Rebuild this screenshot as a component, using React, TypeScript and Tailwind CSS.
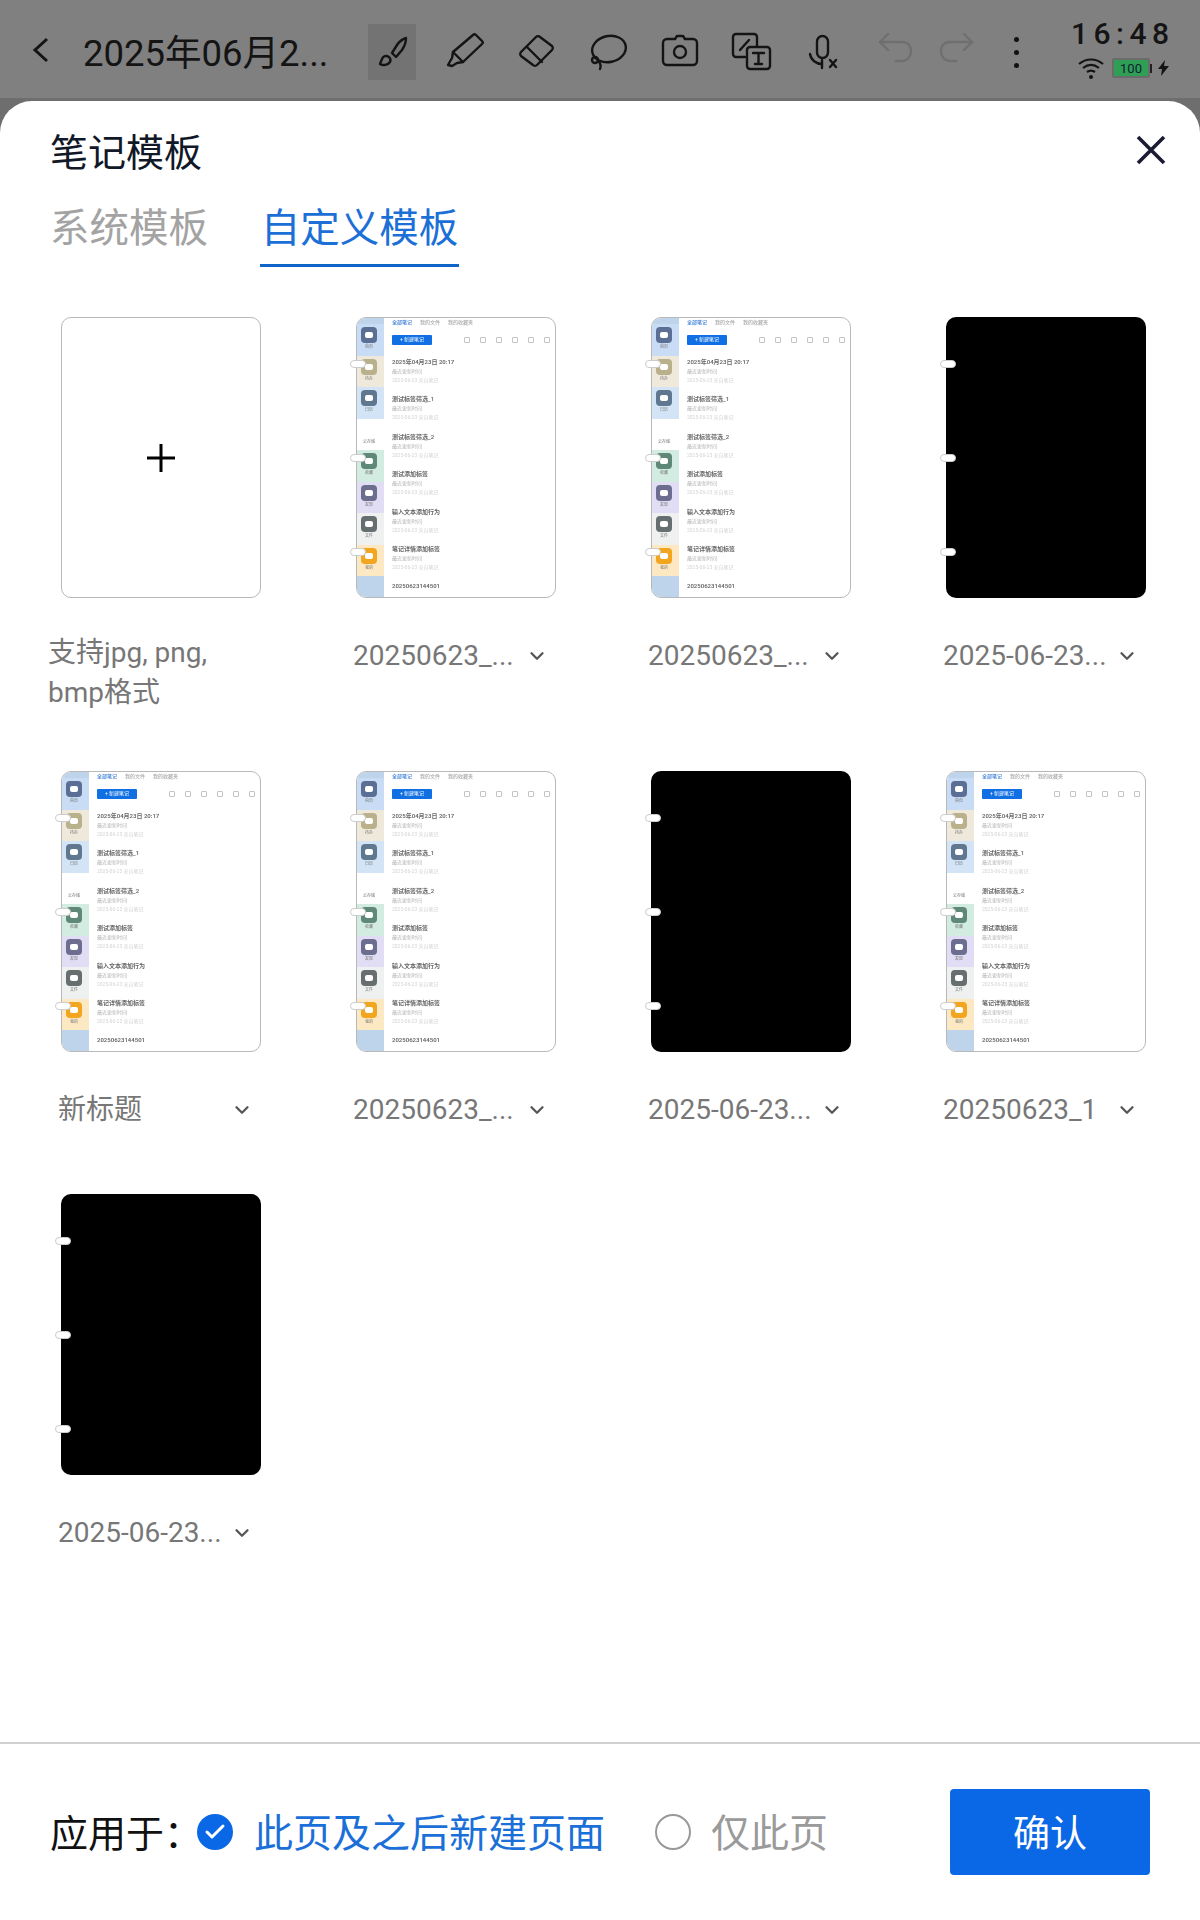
import React from "react";
import { ChevronDown, Check } from "lucide-react";

const FONT = "font-['Roboto','Noto_Sans_CJK_SC',sans-serif]";

const sideItems = [
  { bg: "bg-[#c9dcf5]", icon: "bg-[#5b6f95]", label: "首页" },
  { bg: "bg-[#efe9dc]", icon: "bg-[#b9b08c]", label: "待办" },
  { bg: "bg-[#d3e4f6]", icon: "bg-[#60788f]", label: "日历" },
  { bg: "bg-white", icon: "bg-white", label: "云存储" },
  { bg: "bg-[#d2ece2]", icon: "bg-[#5f8878]", label: "收藏" },
  { bg: "bg-[#e0ddf4]", icon: "bg-[#6d6d90]", label: "发现" },
  { bg: "bg-[#eef1f0]", icon: "bg-[#666e70]", label: "文件" },
  { bg: "bg-[#fde8c4]", icon: "bg-[#f2a51e]", label: "我的" },
];

const noteTitles = [
  "2025年04月23日 20:17",
  "测试标签筛选_1",
  "测试标签筛选_2",
  "测试添加标签",
  "输入文本添加行为",
  "笔记详情添加标签",
];

function Rings() {
  return (
    <>
      <div className="absolute left-[-6px] top-[43px] h-[8px] w-[16px] rounded-full border border-[#ccc] bg-white" />
      <div className="absolute left-[-6px] top-[137px] h-[8px] w-[16px] rounded-full border border-[#ccc] bg-white" />
      <div className="absolute left-[-6px] top-[231px] h-[8px] w-[16px] rounded-full border border-[#ccc] bg-white" />
    </>
  );
}

function ScreenThumb() {
  return (
    <div className="relative h-[281px] w-[200px]">
      <div className="flex h-full w-full overflow-hidden rounded-[10px] border-[1.5px] border-[#b8b8b8] bg-white">
        <div className="flex w-[27px] shrink-0 flex-col bg-[#bed4ea] pt-[6px] blur-[0.3px]">
          {sideItems.map((s) => (
            <div key={s.label} className={`flex h-[31.5px] flex-col items-center pr-[3px] pt-[3px] ${s.bg}`}>
              <div className={`flex h-[16px] w-[16px] items-center justify-center rounded-[4px] ${s.icon}`}>
                <div className="h-[6px] w-[8px] rounded-[2px] bg-white" />
              </div>
              <span className="mt-[1px] text-[4px] leading-[5px] text-[#777]">{s.label}</span>
            </div>
          ))}
        </div>
        <div className="min-w-0 flex-1 pl-[8px] blur-[0.35px]">
          <div className="flex h-[9px] items-center gap-[8px] text-[5px] font-medium text-[#aaa]">
            <span className="text-[#3d7fd6]">全部笔记</span>
            <span>我的文件</span>
            <span>我的收藏夹</span>
          </div>
          <div className="mt-[4px] flex h-[18px] items-center justify-between pr-[5px]">
            <div className="flex h-[10px] w-[40px] items-center justify-center rounded-[1px] bg-[#0f6fe3] text-[5px] text-white">
              + 新建笔记
            </div>
            <div className="flex gap-[10px]">
              {[0, 1, 2, 3, 4, 5].map((i) => (
                <div key={i} className="h-[6px] w-[6px] rounded-[1px] border border-[#c4c4c4]" />
              ))}
            </div>
          </div>
          <div className="pt-[9px]">
            {noteTitles.map((t) => (
              <div key={t} className="h-[37.4px] whitespace-nowrap">
                <div className="text-[6px] leading-[8px] font-semibold text-[#666]">{t}</div>
                <div className="mt-[2px] text-[5px] leading-[6px] text-[#b5b5b5]">最近更新时间</div>
                <div className="mt-[3px] text-[5px] leading-[6px] text-[#d4d4d4]">2025-06-23 来自笔记</div>
              </div>
            ))}
            <div className="text-[6px] leading-[8px] font-semibold text-[#666]">20250623144501</div>
          </div>
        </div>
      </div>
      <Rings />
    </div>
  );
}

function BlackThumb() {
  return (
    <div className="relative h-[281px] w-[200px] rounded-[10px] bg-black">
      <Rings />
    </div>
  );
}

function Caption({ children }: { children: React.ReactNode }) {
  return (
    <div className="relative ml-[-3px] mt-[38px] flex h-[40px] w-[200px] items-center text-[28px] leading-[40px] text-[#777]">
      <span className="whitespace-nowrap">{children}</span>
      <ChevronDown size={22} strokeWidth={2.5} className="absolute left-[173px] top-[9px] text-[#555]" />
    </div>
  );
}

const templates = [
  { name: "20250623_...", black: false },
  { name: "20250623_...", black: false },
  { name: "2025-06-23...", black: true },
  { name: "新标题", black: false },
  { name: "20250623_...", black: false },
  { name: "2025-06-23...", black: true },
  { name: "20250623_1", black: false },
  { name: "2025-06-23...", black: true },
];

function ToolIcon({ w = 72, children, active }: { w?: number; children: React.ReactNode; active?: boolean }) {
  return (
    <div className="flex h-[56px] items-center justify-center" style={{ width: w }}>
      <div className={`flex h-[56px] w-[48px] items-center justify-center ${active ? "bg-[#737373]" : ""}`}>
        <svg width="44" height="44" viewBox="0 0 44 44" fill="none" stroke="currentColor" strokeWidth="2.4" strokeLinecap="round" strokeLinejoin="round">
          {children}
        </svg>
      </div>
    </div>
  );
}

function TopBar() {
  return (
    <div className="flex h-[98px] shrink-0 items-center bg-[#808080] pl-[32px] pt-[6px] text-[#141414]">
      <svg width="18" height="28" viewBox="0 0 18 28" fill="none" stroke="currentColor" strokeWidth="3" className="mb-[4px]">
        <path d="M15 3 3 14l12 11" />
      </svg>
      <div className="ml-[33px] mt-[3px] w-[273px] whitespace-nowrap text-[36.5px] leading-[56px]">2025年06月2...</div>
      <ToolIcon active>
        <path d="M36 8c-3 1-7 4-9 7l-5 8 4 4 6-7c2-3 4-8 4-12z" />
        <path d="M19 27c-3-2-6-1-7 2l-2 5c3 2 8 1 10-2 1-2 0-4-1-5z" />
      </ToolIcon>
      <ToolIcon>
        <path d="M31 5c1-1 2-1 3 0l6 6c1 1 1 2 0 3L21 32l-10-10z" />
        <path d="M11 22l-1 6-4 7 4 1 5-3 6-1" />
      </ToolIcon>
      <ToolIcon>
        <path d="M22 7c1-1 3-1 4 0l12 9c1 1 1 3 0 4L23 35c-1 1-3 1-4 0L7 26c-1-1-1-3 0-4z" />
        <path d="M13 17l15 15" />
      </ToolIcon>
      <ToolIcon>
        <ellipse cx="23" cy="19" rx="17" ry="13" transform="rotate(-12 23 19)" />
        <circle cx="9" cy="30" r="3" />
        <path d="M12 31c3 2 3 6 2 8" />
      </ToolIcon>
      <ToolIcon>
        <path d="M9 9h8l2-3h6l2 3h8a4 4 0 0 1 4 4v18a4 4 0 0 1-4 4H9a4 4 0 0 1-4-4V13a4 4 0 0 1 4-4z" />
        <circle cx="22" cy="22" r="6" />
      </ToolIcon>
      <ToolIcon>
        <path d="M15 27H6a3 3 0 0 1-3-3V7a3 3 0 0 1 3-3h18a3 3 0 0 1 3 3v9" />
        <path d="M10 20l9-10" />
        <rect x="17" y="17" width="23" height="22" rx="3" />
        <path d="M23 23h11M28.500 23v11M25 34h7" />
      </ToolIcon>
      <ToolIcon>
        <rect x="15" y="6" width="11" height="22" rx="5.500" />
        <path d="M8 24c1 6 6 10 12 10" />
        <path d="M20 30v8" />
        <path d="M28 30l6 7M34 30l-6 7" />
      </ToolIcon>
      <div className="text-[#6f6f6f]">
        <ToolIcon>
          <path d="M6 12h22c6 0 9 4 9 9s-3 10-9 10h-6" />
          <path d="M14 4 6 12l8 8" />
        </ToolIcon>
      </div>
      <div className="text-[#6f6f6f]">
        <ToolIcon w={48}>
          <path d="M38 12H16c-6 0-9 4-9 9s3 10 9 10h6" />
          <path d="M30 4l8 8-8 8" />
        </ToolIcon>
      </div>
      <div className="flex h-[56px] w-[72px] flex-col items-center justify-center gap-[8px]">
        <div className="h-[5px] w-[5px] rounded-full bg-[#111]" />
        <div className="h-[5px] w-[5px] rounded-full bg-[#111]" />
        <div className="h-[5px] w-[5px] rounded-full bg-[#111]" />
      </div>
      <div className="ml-[19px] mt-[-6px] flex w-[108px] flex-col">
        <div className="h-[32px] whitespace-nowrap text-[30px] font-medium leading-[32px] tracking-[5.5px]">16:48</div>
        <div className="mt-[6px] flex items-center">
          <svg width="28" height="24" viewBox="0 0 28 24" fill="none" stroke="currentColor" strokeWidth="2.2" className="ml-[6px]">
            <path d="M2 8c7-6 17-6 24 0M6 12c5-4 11-4 16 0M10 16c3-2 5-2 8 0" />
            <circle cx="14" cy="21" r="2" fill="currentColor" stroke="none" />
          </svg>
          <div className="ml-[7px] rounded-[2px] border-2 border-[#6b6b6b]">
            <div className="flex h-[16px] w-[34px] items-center justify-center bg-[#2e9f55] text-[13px] leading-none text-[#123]">
              100
            </div>
          </div>
          <div className="h-[9px] w-[2px] bg-[#222]" />
          <svg width="11" height="16" viewBox="0 0 11 16" fill="currentColor" className="ml-[6px]">
            <path d="M7 0 0 9h4l-1 7 8-10H6z" />
          </svg>
        </div>
      </div>
    </div>
  );
}

export default function App() {
  return (
    <div className={`flex h-[1920px] w-[1200px] flex-col overflow-hidden bg-[#6e6e6e] ${FONT}`}>
      <TopBar />
      <div className="mt-[3px] flex min-h-0 flex-1 flex-col rounded-t-[32px] bg-white">
        <div className="flex items-start justify-between pl-[50px] pr-[34px] pt-[29px]">
          <h1 className="text-[38px] leading-[46px] text-[#111827]">笔记模板</h1>
          <svg width="30" height="30" viewBox="0 0 30 30" stroke="#1b1b33" strokeWidth="3.6" className="mt-[5px]">
            <path d="M2 2l26 26M28 2 2 28" />
          </svg>
        </div>
        <div className="mt-[23px] flex h-[68px] pl-[50px]">
          <div className="w-[210px] text-[39.500px] leading-[60px] text-[#a3a3a3]">系统模板</div>
          <div className="h-[68px] w-[199px] border-b-[3px] border-[#0f66c8] text-center text-[39.500px] leading-[60px] whitespace-nowrap text-[#1b6fd6]">
            自定义模板
          </div>
        </div>
        <div className="grid flex-1 grid-cols-[repeat(4,200px)] grid-rows-[454px_423px_auto] gap-x-[95px] pl-[61px] pt-[50px]">
          <div>
            <div className="flex h-[281px] w-[200px] items-center justify-center rounded-[10px] border-[1.5px] border-[#b8b8b8]">
              <svg width="28" height="28" viewBox="0 0 28 28" stroke="#000" strokeWidth="3">
                <path d="M0 14h28M14 0v28" />
              </svg>
            </div>
            <div className="ml-[-13px] mt-[35px] w-[180px] text-[28px] leading-[40px] text-[#777]">支持jpg, png, bmp格式</div>
          </div>
          {templates.map((t, i) => (
            <div key={i}>
              {t.black ? <BlackThumb /> : <ScreenThumb />}
              <Caption>{t.name}</Caption>
            </div>
          ))}
        </div>
        <div className="flex h-[178px] shrink-0 items-center border-t-2 border-[#d0d0d0] pl-[50px] pr-[50px]">
          <span className="mt-[4px] text-[38px] text-[#111]">应用于：</span>
          <div className="ml-[-5px] flex h-[36px] w-[36px] items-center justify-center rounded-full bg-[#0a68e6]">
            <Check size={24} strokeWidth={3} className="text-white" />
          </div>
          <span className="ml-[21px] mt-[4px] whitespace-nowrap text-[39px] text-[#1a6fd8]">此页及之后新建页面</span>
          <div className="ml-[50px] h-[36px] w-[36px] rounded-full border-2 border-[#999]" />
          <span className="ml-[20px] mt-[4px] whitespace-nowrap text-[39px] text-[#9a9a9a]">仅此页</span>
          <button className="ml-auto h-[86px] w-[200px] rounded-[4px] bg-[#0a68e6] pt-[6px] text-[37px] text-white">确认</button>
        </div>
      </div>
    </div>
  );
}
